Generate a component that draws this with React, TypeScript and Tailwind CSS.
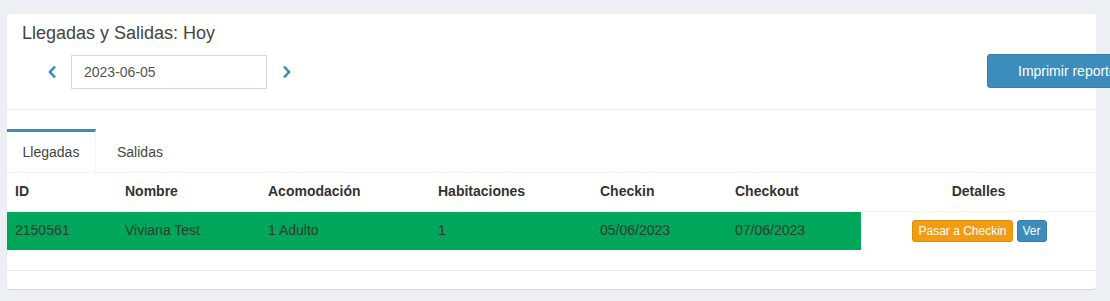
const rows = [
  {
    id: "2150561",
    nombre: "Viviana Test",
    acomodacion: "1 Adulto",
    habitaciones: "1",
    checkin: "05/06/2023",
    checkout: "07/06/2023",
  },
];

const ChevronLeft = () => (
  <svg width="9" height="14" viewBox="0 0 9 14">
    <path d="M7 1.5 L2 7 L7 12.5" fill="none" stroke="#3c8dbc" strokeWidth="2.6" />
  </svg>
);

const ChevronRight = () => (
  <svg width="9" height="14" viewBox="0 0 9 14">
    <path d="M2 1.5 L7 7 L2 12.5" fill="none" stroke="#3c8dbc" strokeWidth="2.6" />
  </svg>
);

const App = () => {
  return (
    <div
      className="w-[1110px] h-[301px] overflow-hidden bg-[#ecf0f5] pt-[14px] pl-[7px] text-[14px] text-[#333]"
      style={{ fontFamily: '"Liberation Sans", Arial, sans-serif' }}
    >
      <div className="w-[1089px] h-[275px] bg-white rounded-[3px] shadow-[0_1px_1px_rgba(0,0,0,0.12)]">
        {/* Header */}
        <div className="h-[96px] border-b border-[#ebebeb] pl-[15px] pt-[9px]">
          <h3 className="text-[18px] leading-[20px] text-[#444]">Llegadas y Salidas: Hoy</h3>
          <div className="flex items-center mt-[12px]">
            <div className="flex items-center">
              <button className="w-[34px] h-[34px] flex items-center justify-center ml-[13px] mr-[2px]">
                <ChevronLeft />
              </button>
              <div className="w-[196px] h-[34px] border border-[#d2d6de] px-[12px] flex items-center text-[#555]">
                2023-06-05
              </div>
              <button className="w-[34px] h-[34px] flex items-center justify-center ml-[2px]">
                <ChevronRight />
              </button>
            </div>
            <button className="ml-auto mr-[-72px] w-[181px] h-[34px] -mt-[2px] bg-[#3c8dbc] border border-[#367fa9] rounded-[3px] text-white text-[14px] text-left pl-[30px] shrink-0 whitespace-nowrap">
              Imprimir reporte
            </button>
          </div>
        </div>

        {/* Tabs */}
        <div className="mt-[19px] flex border-b border-[#f4f4f4] h-[44px]">
          <div className="w-[89px] h-[43px] border-t-[3px] border-[#3c8dbc] border-r border-r-[#f4f4f4] flex items-center justify-center text-[#444]">
            Llegadas
          </div>
          <div className="ml-[6px] px-[15px] h-[43px] flex items-center pt-[4px] text-[#444]">Salidas</div>
        </div>

        {/* Table */}
        <table className="w-[1089px] table-fixed border-collapse">
          <colgroup>
            <col className="w-[110px]" />
            <col className="w-[143px]" />
            <col className="w-[170px]" />
            <col className="w-[162px]" />
            <col className="w-[135px]" />
            <col className="w-[134px]" />
            <col className="w-[235px]" />
          </colgroup>
          <thead>
            <tr className="h-[38px]">
              <th className="text-left font-bold px-[8px]">ID</th>
              <th className="text-left font-bold px-[8px]">Nombre</th>
              <th className="text-left font-bold px-[8px]">Acomodación</th>
              <th className="text-left font-bold px-[8px]">Habitaciones</th>
              <th className="text-left font-bold px-[8px]">Checkin</th>
              <th className="text-left font-bold px-[8px]">Checkout</th>
              <th className="text-center font-bold px-[8px]">Detalles</th>
            </tr>
          </thead>
          <tbody>
            {rows.map((r) => (
              <tr key={r.id} className="h-[39px] border-t border-[#f4f4f4]">
                <td className="bg-[#00a65a] px-[8px] text-[#2b3b30]">{r.id}</td>
                <td className="bg-[#00a65a] px-[8px] text-[#2b3b30]">{r.nombre}</td>
                <td className="bg-[#00a65a] px-[8px] text-[#2b3b30]">{r.acomodacion}</td>
                <td className="bg-[#00a65a] px-[8px] text-[#2b3b30]">{r.habitaciones}</td>
                <td className="bg-[#00a65a] px-[8px] text-[#2b3b30]">{r.checkin}</td>
                <td className="bg-[#00a65a] px-[8px] text-[#2b3b30]">{r.checkout}</td>
                <td className="px-[8px] text-center align-middle">
                  <div className="flex justify-center gap-[4px] pl-[2px]">
                    <button className="h-[22px] px-[5px] bg-[#f39c12] border border-[#e08e0b] rounded-[3px] text-white text-[12px] leading-[20px]">
                      Pasar a Checkin
                    </button>
                    <button className="h-[22px] px-[5px] bg-[#3c8dbc] border border-[#367fa9] rounded-[3px] text-white text-[12px] leading-[20px]">
                      Ver
                    </button>
                  </div>
                </td>
              </tr>
            ))}
            <tr className="h-[20px] border-b border-[#e9e9e9]">
              <td colSpan={7}></td>
            </tr>
          </tbody>
        </table>
      </div>
    </div>
  );
};

export default App;
